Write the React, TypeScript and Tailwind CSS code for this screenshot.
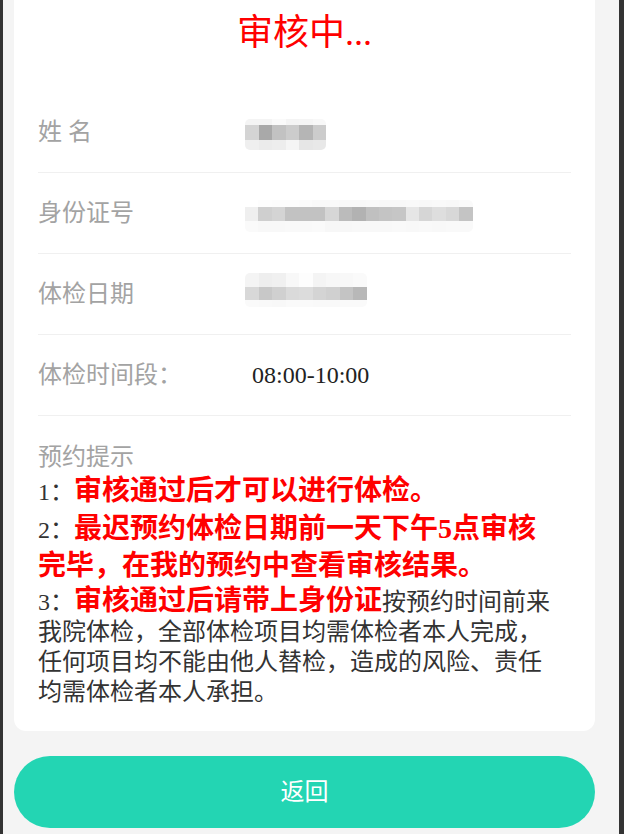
import React from "react";

type Row = { h: number; colors: string[] };

function Mosaic({ cellW, rows, className = "" }: { cellW: number; rows: Row[]; className?: string }) {
  return (
    <div className={"flex flex-col overflow-hidden rounded-[5px] blur-[0.4px] " + className}>
      {rows.map((r, i) => (
        <div key={i} className="flex">
          {r.colors.map((c, j) => (
            <div key={j} style={{ width: cellW, height: r.h, background: c }} />
          ))}
        </div>
      ))}
    </div>
  );
}

const nameRows: Row[] = [
  { h: 6, colors: ["#f4f4f4", "#f4f4f4", "#fafafa", "#f4f4f4", "#f5f5f5", "#f8f8f8"] },
  { h: 15, colors: ["#d4d4d4", "#a9a9a9", "#c2c2c2", "#cccccc", "#b5b5b5", "#cccccc"] },
  { h: 10, colors: ["#efefef", "#ebebeb", "#ededed", "#f5f5f5", "#e6e6e6", "#e8e8e8"] },
];

const idRows: Row[] = [
  {
    h: 7,
    colors: ["#ffffff", "#fdfdfd", "#fcfcfc", "#fcfcfc", "#fbfbfb", "#f9f9f9", "#f9f9f9", "#f8f8f8", "#f8f8f8", "#f9f9f9", "#f8f8f8", "#f8f8f8", "#f9f9f9", "#f8f8f8", "#f9f9f9", "#f8f8f8", "#fafafa"],
  },
  {
    h: 14,
    colors: ["#efefef", "#cfcfcf", "#d4d4d4", "#c2c2c2", "#c2c2c2", "#c2c2c2", "#d6d6d6", "#bbbbbb", "#b2b2b2", "#c0c0c0", "#c4c4c4", "#c6c6c6", "#e6e6e6", "#d6d6d6", "#dedede", "#d8d8d8", "#c4c4c4"],
  },
  {
    h: 11,
    colors: ["#fafafa", "#f8f8f8", "#f8f8f8", "#f9f9f9", "#f9f9f9", "#fafafa", "#f7f7f7", "#f7f7f7", "#f8f8f8", "#f8f8f8", "#f8f8f8", "#f9f9f9", "#f8f8f8", "#f9f9f9", "#f8f8f8", "#f9f9f9", "#f9f9f9"],
  },
];

const dateRows: Row[] = [
  { h: 14, colors: ["#f4f4f4", "#eeeeee", "#f0f0f0", "#f8f8f8", "#fdfdfd", "#f4f4f4", "#f7f7f7", "#f8f8f8", "#fafafa"] },
  { h: 13, colors: ["#d8d8d8", "#c8c8c8", "#d0d0d0", "#dadada", "#dcdcdc", "#d4d4d4", "#d0d0d0", "#c4c4c4", "#b8b8b8"] },
  { h: 7, colors: ["#fafafa", "#f9f9f9", "#f8f8f8", "#fafafa", "#fafafa", "#f9f9f9", "#f9f9f9", "#fafafa", "#fafafa"] },
];

function InfoRow({ label, children }: { label: string; children: React.ReactNode }) {
  return (
    <div className="flex h-[81px] items-center border-b border-[#f0f0f0]">
      <div className="w-[207px] shrink-0 text-[24px] leading-[30px] text-[#a3a3a3]">{label}</div>
      <div className="flex items-center">{children}</div>
    </div>
  );
}

export default function App() {
  return (
    <div className="flex min-h-[834px] w-[624px] bg-[#333333] font-['Liberation_Serif','Noto_Sans_CJK_SC',serif]">
      <div className="ml-[3px] mr-[5px] flex flex-1 flex-col bg-[#f4f4f4] pb-[5px]">
        <div className="ml-[11px] w-[581px] rounded-b-[12px] bg-white px-[24px]">
          <div className="flex h-[92px] justify-center pt-[13px]">
            <div className="text-[36px] leading-[40px] text-[#ff0000]">审核中...</div>
          </div>
          <InfoRow label="姓 名">
            <Mosaic cellW={13.5} rows={nameRows} className="translate-y-[2px]" />
          </InfoRow>
          <InfoRow label="身份证号">
            <Mosaic cellW={13.4} rows={idRows} className="translate-y-[3px]" />
          </InfoRow>
          <InfoRow label="体检日期">
            <Mosaic cellW={13.5} rows={dateRows} className="-translate-y-[4px]" />
          </InfoRow>
          <InfoRow label="体检时间段：">
            <span className="pl-[7px] text-[24px] leading-[30px] text-[#222]">08:00-10:00</span>
          </InfoRow>
          <div className="w-[520px] pb-[24px] pt-[26px] text-[24px] leading-[30px] text-[#333]">
            <div className="text-[#a3a3a3]">预约提示</div>
            <div className="leading-[37px]">
              1：<span className="text-[28px] font-bold leading-[37px] text-[#ff0000]">审核通过后才可以进行体检。</span>
            </div>
            <div className="leading-[35px]">
              2：<span className="text-[28px] font-bold leading-[35px] text-[#ff0000]">最迟预约体检日期前一天下午5点审核完毕，在我的预约中查看审核结果。</span>
            </div>
            <div>
              3：<span className="text-[28px] font-bold leading-[32px] text-[#ff0000]">审核通过后请带上身份证</span>
              按预约时间前来我院体检，全部体检项目均需体检者本人完成，任何项目均不能由他人替检，造成的风险、责任均需体检者本人承担。
            </div>
          </div>
        </div>
        <button className="ml-[11px] mt-[25px] flex h-[72px] w-[581px] items-center justify-center rounded-full bg-[#23d5b3] text-[24px] text-white">
          返回
        </button>
      </div>
    </div>
  );
}
